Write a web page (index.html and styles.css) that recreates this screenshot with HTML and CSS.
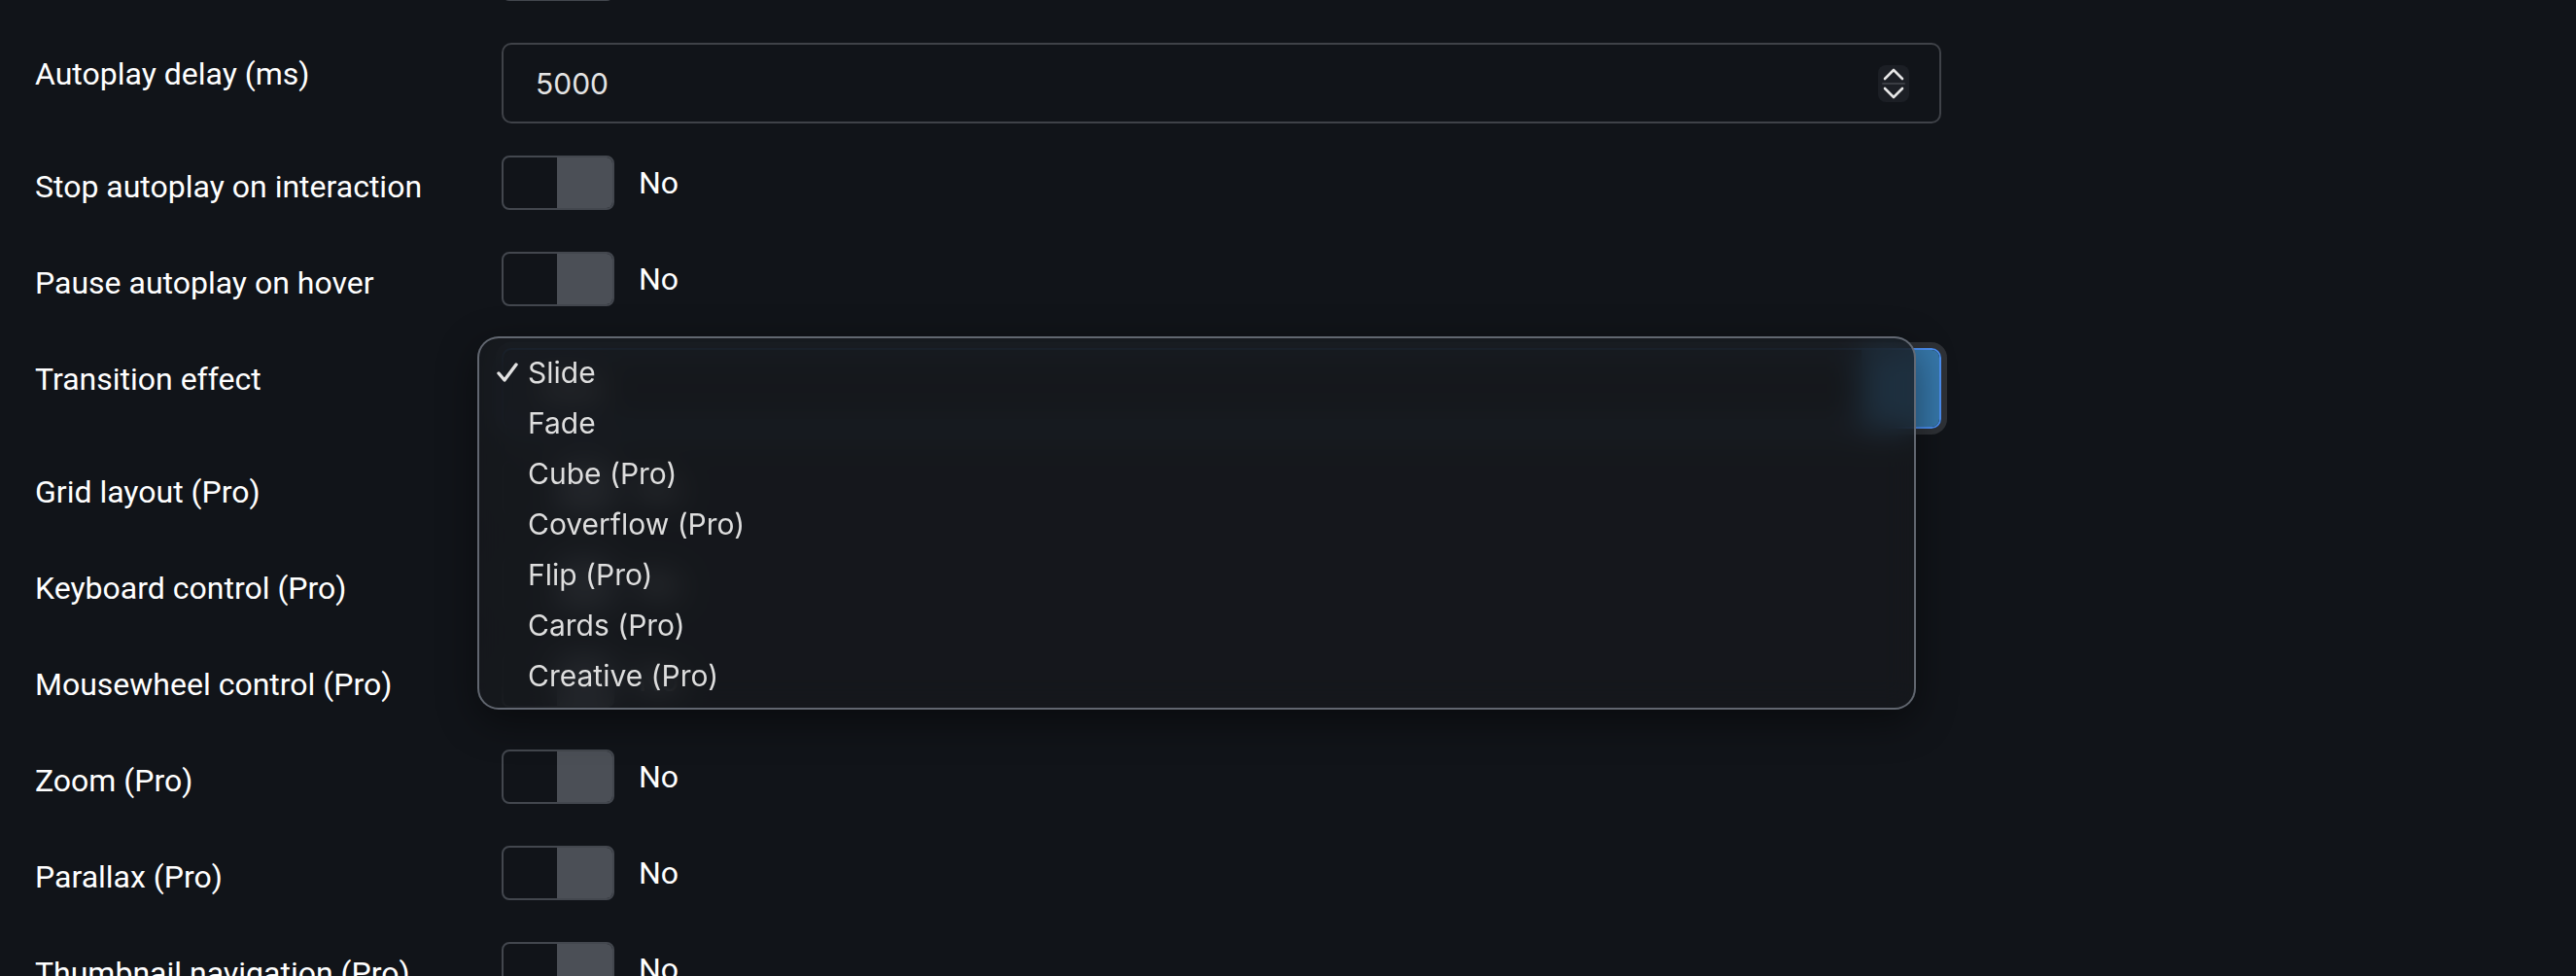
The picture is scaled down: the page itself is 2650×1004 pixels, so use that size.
FILE: index.html
```html
<!DOCTYPE html>
<html lang="en">
<head>
    <meta charset="UTF-8" />
    <meta name="viewport" content="width=device-width, initial-scale=1" />
    <title>Slider settings</title>
    <link rel="stylesheet" href="styles.css">
</head>
<body>
    <main class="settings">
        <div class="field">
            <div class="field-label">Autoplay</div>
            <div class="field-control">
                <span class="toggle"></span>
                <span class="toggle-text">No</span>
            </div>
        </div>
        <div class="field">
            <div class="field-label">Autoplay delay (ms)</div>
            <div class="field-control">
                <div class="number-input">
                    <span class="number-value">5000</span>
                    <span class="spinner">
                        <svg width="32" height="38" viewBox="0 0 32 38">
                            <polyline points="7,14 16,5 25,14" />
                            <line class="divider" x1="5" y1="19" x2="27" y2="19" />
                            <polyline points="7,24 16,33 25,24" />
                        </svg>
                    </span>
                </div>
            </div>
        </div>
        <div class="field">
            <div class="field-label">Stop autoplay on interaction</div>
            <div class="field-control">
                <span class="toggle"></span>
                <span class="toggle-text">No</span>
            </div>
        </div>
        <div class="field">
            <div class="field-label">Pause autoplay on hover</div>
            <div class="field-control">
                <span class="toggle"></span>
                <span class="toggle-text">No</span>
            </div>
        </div>
        <div class="field">
            <div class="field-label">Transition effect</div>
            <div class="field-control has-menu">
                <div class="select">
                    <span class="select-value">Slide</span>
                    <span class="select-arrow"></span>
                </div>
                <ul class="menu">
                    <li class="menu-item selected">
                        <span class="check">
                            <svg width="22" height="20" viewBox="0 0 22 20"><polyline points="2,11 8,18 20,2" /></svg>
                        </span>Slide
                    </li>
                    <li class="menu-item"><span class="check"></span>Fade</li>
                    <li class="menu-item"><span class="check"></span>Cube (Pro)</li>
                    <li class="menu-item"><span class="check"></span>Coverflow (Pro)</li>
                    <li class="menu-item"><span class="check"></span>Flip (Pro)</li>
                    <li class="menu-item"><span class="check"></span>Cards (Pro)</li>
                    <li class="menu-item"><span class="check"></span>Creative (Pro)</li>
                </ul>
            </div>
        </div>
        <div class="field">
            <div class="field-label">Grid layout (Pro)</div>
            <div class="field-control">
                <span class="toggle"></span>
                <span class="toggle-text">No</span>
            </div>
        </div>
        <div class="field">
            <div class="field-label">Keyboard control (Pro)</div>
            <div class="field-control">
                <span class="toggle"></span>
                <span class="toggle-text">No</span>
            </div>
        </div>
        <div class="field">
            <div class="field-label">Mousewheel control (Pro)</div>
            <div class="field-control">
                <span class="toggle"></span>
                <span class="toggle-text">No</span>
            </div>
        </div>
        <div class="field">
            <div class="field-label">Zoom (Pro)</div>
            <div class="field-control">
                <span class="toggle"></span>
                <span class="toggle-text">No</span>
            </div>
        </div>
        <div class="field">
            <div class="field-label">Parallax (Pro)</div>
            <div class="field-control">
                <span class="toggle"></span>
                <span class="toggle-text">No</span>
            </div>
        </div>
        <div class="field">
            <div class="field-label">Thumbnail navigation (Pro)</div>
            <div class="field-control">
                <span class="toggle"></span>
                <span class="toggle-text">No</span>
            </div>
        </div>
    </main>
</body>
</html>
```

FILE: styles.css
```css
/* Base */
* {
    box-sizing: border-box;
}
html, body {
    height: 100%;
    overflow: hidden;
}
body {
    margin: 0;
    background: #111419;
    color: #fff;
    font-family: Roboto, 'Liberation Sans', sans-serif;
}

/* Settings list (page is scrolled, first row is cut off) */
.settings {
    margin-top: -55px;
    padding-left: 36px;
}
.field {
    display: flex;
    align-items: flex-start;
    margin-bottom: 33px;
}
.field-label {
    width: 480px;
    flex-shrink: 0;
    padding: 10px 0 12px;
    font-size: 32px;
    line-height: 44px;
    color: #fff;
}
.field-control {
    width: 1481px;
    display: flex;
    align-items: center;
    gap: 25px;
}
.has-menu {
    position: relative;
}

/* Toggle */
.toggle {
    width: 116px;
    height: 56px;
    display: flex;
    justify-content: flex-end;
    border: 2px solid #43474e;
    border-radius: 8px;
    overflow: hidden;
}
.toggle::after {
    content: "";
    width: 57px;
    background: #4b4f56;
}
.toggle-text {
    font-size: 32px;
    line-height: 56px;
}

/* Number input */
.number-input {
    width: 100%;
    height: 83px;
    display: flex;
    align-items: center;
    justify-content: space-between;
    padding: 0 31px 0 33px;
    border: 2px solid #3f4248;
    border-radius: 10px;
}
.number-value {
    font-family: Inter, 'Noto Sans', sans-serif;
    font-size: 30px;
    color: #e4e4e4;
}
.spinner {
    width: 32px;
    height: 38px;
    background: #1c1f25;
    border-radius: 8px;
}
.spinner svg {
    display: block;
    fill: none;
    stroke: #e6e6e6;
    stroke-width: 2.6;
    stroke-linecap: round;
    stroke-linejoin: round;
}
.spinner .divider {
    stroke: #3a3d43;
    stroke-width: 2;
}

/* Select (focused, menu open) */
.select {
    width: 100%;
    height: 83px;
    display: flex;
    border: 2px solid #4b8ef0;
    border-radius: 10px;
    box-shadow: 0 0 0 6px #2e3136;
    overflow: hidden;
}
.select-value {
    flex: 1;
    padding-left: 33px;
    font-family: Inter, 'Noto Sans', sans-serif;
    font-size: 30px;
    line-height: 79px;
    color: #e4e4e4;
}
.select-arrow {
    width: 80px;
    background: #3677a9;
}

/* Native-looking popup menu */
.menu {
    position: absolute;
    left: -25px;
    top: -12px;
    width: 1480px;
    margin: 0;
    padding: 9px 0 7px;
    list-style: none;
    background: rgba(22, 25, 29, 0.76);
    backdrop-filter: blur(16px);
    border: 2px solid rgba(112, 118, 127, 0.85);
    border-radius: 22px;
    box-shadow: 0 12px 40px rgba(0, 0, 0, 0.45);
    font-family: Inter, 'Noto Sans', sans-serif;
    font-size: 30px;
    color: #dedede;
}
.menu-item {
    height: 52px;
    display: flex;
    align-items: center;
    padding-left: 18px;
}
.check {
    width: 32px;
    flex-shrink: 0;
}
.check svg {
    display: block;
    fill: none;
    stroke: #e2e2e2;
    stroke-width: 3.4;
    stroke-linecap: round;
    stroke-linejoin: round;
}
```
